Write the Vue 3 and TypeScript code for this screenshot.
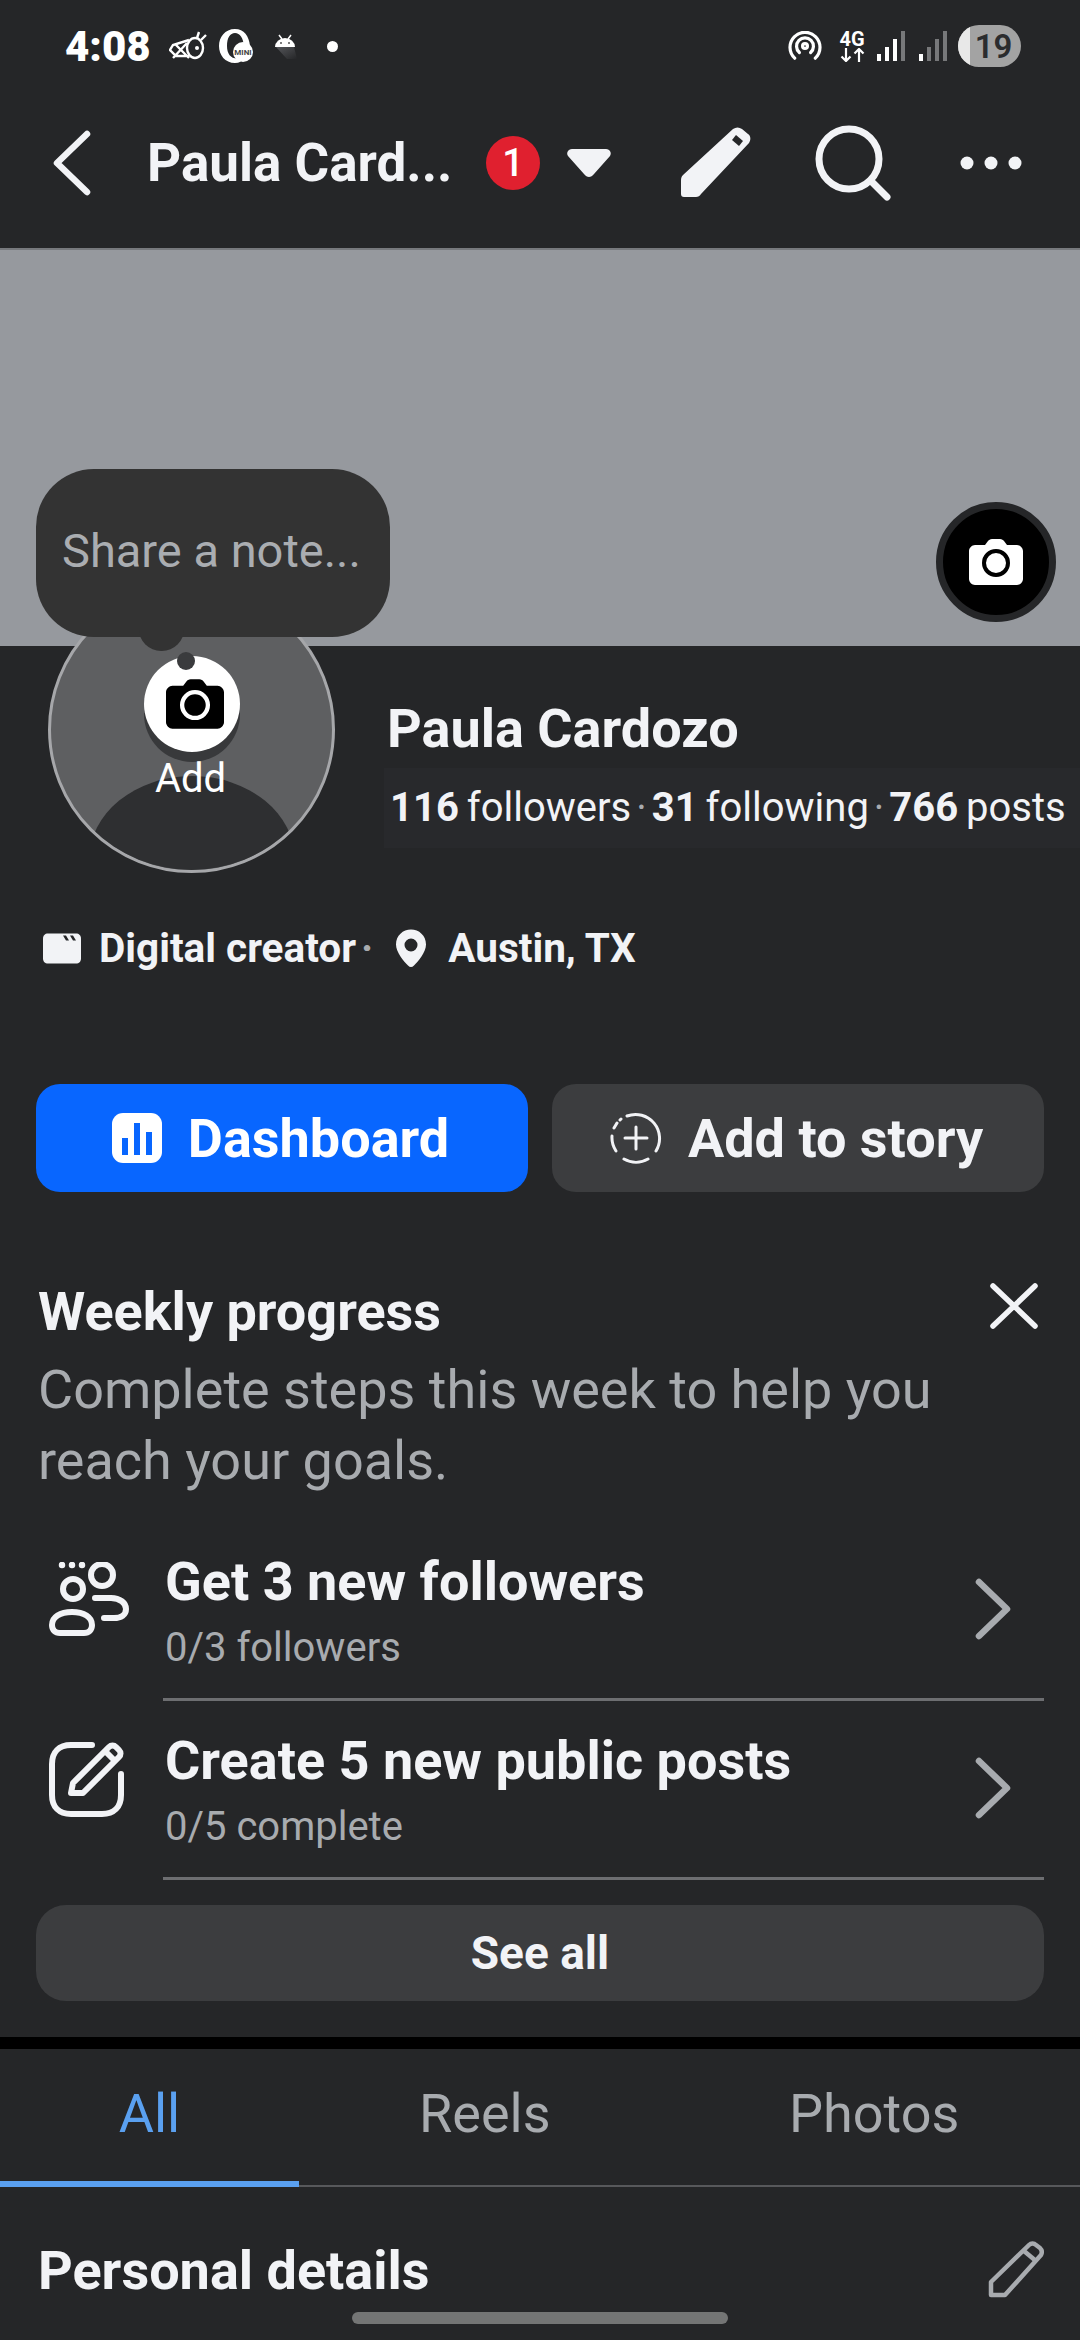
<template>
  <div class="screen">
    <header class="top">
      <div class="status">
        <span class="time">4:08</span>
        <svg class="st-bee" width="38" height="30" viewBox="0 0 38 30" fill="none" stroke="#fff" stroke-width="2.4">
          <ellipse cx="26" cy="17" rx="8" ry="10" />
          <path d="M20 9 4 14l-3 5 6 6 13 0M6 13l14 14M4 27 18 12M28 7l2-6M32 9l5-5" />
          <circle cx="28" cy="17" r="2" fill="#fff" stroke="none" />
        </svg>
        <svg class="st-o" width="36" height="36" viewBox="0 0 36 36">
          <path d="M17 1C7 1 1 9 1 18s6 17 16 17c2 0 4-.5 6-1.500l-3-3C13 31 9 26 9 18S12 5 17 5c5 0 8 5 9 13h6C31 8 26 1 17 1Z" fill="#fff" />
          <circle cx="25" cy="24" r="10" fill="#fff" />
          <text x="25" y="27" text-anchor="middle" font-size="8" font-weight="700" fill="#444" font-family="Roboto, sans-serif">MINI</text>
        </svg>
        <svg class="st-droid" width="24" height="26" viewBox="0 0 24 26">
          <defs>
            <linearGradient id="droid-shadow" x1="0" y1="0" x2="1" y2="1">
              <stop offset="0" stop-color="#55565a" />
              <stop offset="1" stop-color="#252628" />
            </linearGradient>
          </defs>
          <path d="M3 14h18l3 12H14Z" fill="url(#droid-shadow)" />
          <path d="M2 14a10 9 0 0 1 20 0Z" fill="#fff" />
          <path d="M6 2l3 4M18 2l-3 4" stroke="#fff" stroke-width="1.500" />
          <circle cx="8" cy="10" r="1" fill="#555" />
          <circle cx="16" cy="10" r="1" fill="#555" />
        </svg>
        <span class="st-dot"></span>
        <span class="st-spacer"></span>
        <svg class="st-cast" width="34" height="30" viewBox="0 0 36 32" fill="none" stroke="#fff" stroke-width="3.400" stroke-linecap="round">
          <path d="M7 29A16 16 0 1 1 29 29" />
          <path d="M12 23A9 9 0 1 1 24 23" />
          <circle cx="18" cy="16" r="2.600" />
        </svg>
        <div class="st-net">
          <span>4G</span>
          <svg width="25" height="14" viewBox="0 0 25 14" fill="none" stroke="#fff" stroke-width="2.200">
            <path d="M6 0v13M1.500 8.500 6 13l4.500-4.500M19 14V1M14.500 5.500 19 1l4.500 4.500" />
          </svg>
        </div>
        <svg class="st-sig" width="28" height="30" viewBox="0 0 28 30">
          <rect x="0" y="23" width="4" height="7" fill="#fff" />
          <rect x="8" y="16" width="4" height="14" fill="#fff" />
          <rect x="16" y="8" width="4" height="22" fill="#fff" />
          <rect x="24" y="0" width="4" height="30" fill="#77787a" />
        </svg>
        <svg class="st-sig second" width="28" height="30" viewBox="0 0 28 30">
          <rect x="0" y="23" width="4" height="7" fill="#fff" />
          <rect x="8" y="16" width="4" height="14" fill="#77787a" />
          <rect x="16" y="8" width="4" height="22" fill="#77787a" />
          <rect x="24" y="0" width="4" height="30" fill="#77787a" />
        </svg>
        <div class="battery"><span class="charge"></span><b>19</b></div>
      </div>
      <nav class="bar">
        <svg class="back" width="38" height="66" viewBox="0 0 38 66" fill="none" stroke="#f2f3f6" stroke-width="6.500" stroke-linecap="round" stroke-linejoin="round">
          <path d="M34 4 4 33l30 29" />
        </svg>
        <span class="page-name">Paula Card...</span>
        <span class="badge">1</span>
        <svg class="caret" width="46" height="30" viewBox="0 0 46 30">
          <path d="M6 1h34c4 0 6 4 4 7L28 26c-3 4-7 4-10 0L2 8C0 5 2 1 6 1Z" fill="#f2f3f6" />
        </svg>
        <svg class="pen" width="72" height="72" viewBox="0 0 72 72">
          <path d="M54 2c3-2 6-2 9 0l6 5c3 2 3 6 1 9L22 67c-1 2-3 3-5 3H5c-2 0-3-1-3-3V54c0-2 0-4 2-6Z" fill="#f2f3f6" />
          <path d="M57 8 64 14 60 19 53 13Z" fill="#252628" />
        </svg>
        <svg class="search" width="76" height="76" viewBox="0 0 76 76" fill="none" stroke="#f2f3f6" stroke-width="7" stroke-linecap="round">
          <circle cx="34" cy="34" r="30" />
          <path d="M56 56 72 72" />
        </svg>
        <svg class="more" width="62" height="14" viewBox="0 0 62 14" fill="#f2f3f6">
          <circle cx="7" cy="7" r="6.500" /><circle cx="31" cy="7" r="6.500" /><circle cx="55" cy="7" r="6.500" />
        </svg>
      </nav>
    </header>

    <section class="cover">
      <div class="note">Share a note...</div>
      <span class="note-tail"></span>
      <div class="cover-cam">
        <svg width="54" height="46" viewBox="0 0 54 46">
          <path d="M6 6h10l3-4c1-1 2-2 4-2h8c2 0 3 1 4 2l3 4h10c3 0 6 3 6 6v28c0 3-3 6-6 6H6c-3 0-6-3-6-6V12c0-3 3-6 6-6Z" fill="#fff" />
          <circle cx="27" cy="24" r="12" fill="none" stroke="#000" stroke-width="4" />
        </svg>
      </div>
    </section>

    <section class="identity">
      <div class="avatar">
        <span class="body"></span>
        <div class="add-circle">
          <svg width="58" height="50" viewBox="0 0 54 46">
            <path d="M6 6h10l3-4c1-1 2-2 4-2h8c2 0 3 1 4 2l3 4h10c3 0 6 3 6 6v28c0 3-3 6-6 6H6c-3 0-6-3-6-6V12c0-3 3-6 6-6Z" fill="#000" />
            <circle cx="27" cy="24" r="12" fill="none" stroke="#fff" stroke-width="4" />
          </svg>
        </div>
        <span class="note-dot"></span>
        <span class="add-label">Add</span>
      </div>
      <div class="who">
        <h1>Paula Cardozo</h1>
        <p class="stats"><b>116</b> followers<i>·</i><b>31</b> following<i>·</i><b>766</b> posts</p>
      </div>
    </section>

    <section class="meta">
      <svg width="38" height="31" viewBox="0 0 38 30">
        <path d="M5 0h28c3 0 5 2 5 5v20c0 3-2 5-5 5H5c-3 0-5-2-5-5V5c0-3 2-5 5-5Z" fill="#f2f3f6" />
        <path d="M20 2l3 5h3l-3-5ZM27 2l3 5h3l-3-5Z" fill="#252628" />
      </svg>
      <span class="meta-work">Digital creator</span>
      <i>·</i>
      <svg class="pin" width="30" height="39" viewBox="0 0 30 38">
        <path fill-rule="evenodd" d="M15 0c8 0 15 6 15 15 0 8-8 17-12 21-2 2-4 2-6 0C8 32 0 23 0 15 0 6 7 0 15 0Zm0 9a6.500 6.500 0 1 0 0 13 6.500 6.500 0 0 0 0-13Z" fill="#f2f3f6" />
      </svg>
      <span>Austin, TX</span>
    </section>

    <section class="actions">
      <button class="primary">
        <svg width="50" height="50" viewBox="0 0 50 50">
          <rect width="50" height="50" rx="11" fill="#fff" />
          <path d="M10 25h6v17h-6ZM22 10h6v32h-6ZM34 19h6v23h-6Z" fill="#0866ff" />
        </svg>
        Dashboard
      </button>
      <button class="secondary">
        <svg width="52" height="52" viewBox="0 0 52 52" fill="none" stroke="#f2f3f6" stroke-width="3" stroke-linecap="round">
          <path d="M17 4A24 24 0 0 1 46 39M38 47A24 24 0 0 1 14 47M6 39A24 24 0 0 1 2 24M4 16 7 11M10 8l1-1" />
          <path d="M26 15v22M15 26h22" />
        </svg>
        Add to story
      </button>
    </section>

    <section class="weekly">
      <div class="weekly-head">
        <h2>Weekly progress</h2>
        <svg width="48" height="46" viewBox="0 0 48 46" fill="none" stroke="#f2f3f6" stroke-width="5.500" stroke-linecap="round">
          <path d="M3 3 45 43M45 3 3 43" />
        </svg>
      </div>
      <p class="weekly-sub">Complete steps this week to help you reach your goals.</p>
      <div v-for="step in steps" :key="step.title" class="step">
        <div class="step-icon">
          <svg v-if="step.icon === 'people'" width="80" height="76" viewBox="0 0 80 76" fill="none" stroke="#f2f3f6" stroke-width="6" stroke-linecap="round">
            <path d="M13 3h.01M23 3h.01M33 3h.01" stroke-width="6.500" />
            <circle cx="24" cy="27" r="10" />
            <circle cx="53" cy="13" r="11" />
            <path d="M3 63c0-8 8-13 20-13s20 5 20 13c0 5-3 8-8 8H11c-5 0-8-3-8-8Z" />
            <path d="M46 36h16c9 0 15 5 15 11s-5 9-12 9H55" />
          </svg>
          <svg v-else width="76" height="76" viewBox="0 0 76 76" fill="none" stroke="#f2f3f6" stroke-width="6" stroke-linecap="round" stroke-linejoin="round">
            <path d="M43 4H22C10 4 3 11 3 23v31c0 12 7 19 19 19h31c12 0 19-7 19-19V33" />
            <path d="M24 42 60 6c2-2 5-2 7 0l3 3c2 2 2 5 0 7L34 52H22Z" />
            <path d="M57 11l8 8" />
          </svg>
        </div>
        <div class="step-body">
          <div class="step-title">{{ step.title }}</div>
          <div class="step-sub">{{ step.sub }}</div>
          <svg class="chev" width="36" height="62" viewBox="0 0 36 62" fill="none" stroke="#a8abaf" stroke-width="6.500" stroke-linecap="round" stroke-linejoin="round">
            <path d="M4 4 32 31 4 58" />
          </svg>
        </div>
      </div>
      <button class="see-all">See all</button>
    </section>

    <div class="band"></div>

    <div class="tabs">
      <span v-for="tab in tabs" :key="tab.label" class="tab" :class="[tab.cls, { on: tab.on }]">{{ tab.label }}</span>
    </div>

    <section class="details">
      <h2>Personal details</h2>
      <svg width="56" height="58" viewBox="0 0 56 58" fill="none" stroke="#a8abaf" stroke-width="4.500" stroke-linejoin="round">
        <path d="M41 4c2-2 5-2 7 0l4 3c2 2 2 5 1 7L17 54H3V41Z" />
        <path d="M36 10l12 10" />
      </svg>
    </section>

    <div class="home-bar"></div>
  </div>
</template>

<script setup lang="ts">
interface Step {
  title: string
  sub: string
  icon: 'people' | 'edit'
}

const steps: Step[] = [
  { title: 'Get 3 new followers', sub: '0/3 followers', icon: 'people' },
  { title: 'Create 5 new public posts', sub: '0/5 complete', icon: 'edit' },
]

const tabs = [
  { label: 'All', cls: 'tab-all', on: true },
  { label: 'Reels', cls: 'tab-reels', on: false },
  { label: 'Photos', cls: 'tab-photos', on: false },
]
</script>

<style>
html,
body {
  margin: 0;
  background: #252628;
}
</style>

<style scoped>
.screen {
  position: relative;
  width: 1080px;
  height: 2340px;
  overflow: hidden;
  background: #252628;
  color: #f2f3f6;
  font-family: Roboto, "Liberation Sans", sans-serif;
}

h1,
h2,
p {
  margin: 0;
}

button {
  border: none;
  font-family: inherit;
  color: inherit;
}

.top {
  height: 248px;
  box-sizing: border-box;
  padding-top: 23px;
}

.status {
  display: flex;
  align-items: center;
  height: 46px;
  padding: 0 59px 0 65px;
  color: #fff;
}

.time {
  font-size: 42px;
  font-weight: 900;
  width: 104px;
}

.st-o {
  margin-left: 11px;
}

.st-droid {
  margin-left: 19px;
}

.st-dot {
  width: 11px;
  height: 11px;
  border-radius: 50%;
  background: #fff;
  margin-left: 30px;
}

.st-spacer {
  flex: 1;
}

.st-net {
  display: flex;
  flex-direction: column;
  align-items: center;
  width: 26px;
  margin-left: 17px;
  font-size: 20px;
  font-weight: 700;
  line-height: 18px;
}

.st-sig {
  margin-left: 12px;
}

.st-sig.second {
  margin-left: 14px;
}

.battery {
  position: relative;
  display: flex;
  align-items: center;
  justify-content: center;
  width: 63px;
  height: 42px;
  margin-left: 11px;
  border-radius: 21px;
  background: #a3a3a3;
  overflow: hidden;
}

.charge {
  position: absolute;
  left: 0;
  top: 0;
  bottom: 0;
  width: 12px;
  background: #e8e8e8;
}

.battery b {
  position: relative;
  padding-left: 8px;
  font-size: 33px;
  color: #2b2c2e;
  font-weight: 600;
}

.bar {
  display: flex;
  align-items: center;
  height: 112px;
  margin-top: 38px;
  padding-left: 53px;
}

.page-name {
  flex: none;
  margin-left: 56px;
  width: 339px;
  font-size: 53px;
  font-weight: 700;
  white-space: nowrap;
}

.badge {
  flex: none;
  display: flex;
  align-items: center;
  justify-content: center;
  width: 54px;
  height: 54px;
  border-radius: 50%;
  background: #e0202f;
  color: #fff;
  font-size: 38px;
  font-weight: 500;
}

.caret {
  margin-left: 26px;
}

.pen {
  margin-left: 67px;
}

.search {
  margin-left: 64px;
}

.more {
  margin-left: 69px;
}

.cover {
  position: relative;
  height: 398px;
  background: #96999e;
  border-top: 2px solid #77797d;
  box-sizing: border-box;
}

.note {
  position: absolute;
  left: 36px;
  top: 219px;
  display: flex;
  align-items: center;
  box-sizing: border-box;
  width: 354px;
  height: 168px;
  padding: 0 0 6px 26px;
  border-radius: 58px;
  background: #333333;
  color: #aaadb1;
  font-size: 47px;
  white-space: nowrap;
  z-index: 3;
}

.note-tail {
  position: absolute;
  left: 139px;
  top: 375px;
  width: 45px;
  height: 26px;
  border-radius: 0 0 22px 22px;
  background: #333333;
  z-index: 3;
}

.cover-cam {
  position: absolute;
  left: 936px;
  top: 252px;
  display: flex;
  align-items: center;
  justify-content: center;
  width: 120px;
  height: 120px;
  box-sizing: border-box;
  border: 7px solid #252628;
  border-radius: 50%;
  background: #000;
}

.identity {
  display: flex;
  height: 213px;
  padding-left: 48px;
}

.avatar {
  position: relative;
  flex: none;
  width: 287px;
  height: 287px;
  margin-top: -60px;
  box-sizing: border-box;
  border: 3px solid #a6a7aa;
  border-radius: 50%;
  background: #5e5f61;
  overflow: hidden;
  z-index: 1;
}

.body {
  position: absolute;
  left: 38px;
  top: 187px;
  width: 206px;
  height: 168px;
  border-radius: 50%;
  background: #2e2f31;
}

.add-circle {
  position: absolute;
  left: 93px;
  top: 67px;
  display: flex;
  align-items: center;
  justify-content: center;
  width: 96px;
  height: 96px;
  border-radius: 50%;
  background: #fff;
  box-shadow: 0 10px 0 #38393b;
}

.add-circle svg {
  margin-left: 5px;
}

.note-dot {
  position: absolute;
  left: 126px;
  top: 63px;
  width: 18px;
  height: 18px;
  border-radius: 50%;
  background: #3a3b3d;
}

.add-label {
  position: absolute;
  left: 0;
  right: 2px;
  top: 169px;
  text-align: center;
  color: #fff;
  font-size: 40px;
  line-height: 42px;
}

.who {
  flex: 1;
  margin-left: 52px;
  padding-top: 53px;
}

.who h1 {
  font-size: 54px;
  font-weight: 700;
  line-height: 60px;
}

.stats {
  margin-top: 9px;
  margin-left: -3px;
  padding-left: 6px;
  background: #28292c;
  font-size: 40px;
  line-height: 80px;
  word-spacing: -2px;
  white-space: nowrap;
}

.stats b {
  font-weight: 700;
}

.stats i,
.meta i {
  font-style: normal;
  margin: 0 5px;
  color: #a8abaf;
}

.meta {
  display: flex;
  align-items: center;
  height: 50px;
  margin-top: 64px;
  padding-left: 43px;
  font-size: 40.500px;
  font-weight: 700;
  white-space: nowrap;
}

.meta-work {
  margin-left: 18px;
}

.meta .pin {
  margin-left: 18px;
  margin-right: 22px;
}

.actions {
  display: flex;
  gap: 24px;
  padding: 0 36px;
  margin-top: 111px;
}

.actions button {
  display: flex;
  align-items: center;
  justify-content: center;
  gap: 26px;
  flex: 1;
  height: 108px;
  padding-right: 9px;
  border-radius: 24px;
  font-size: 54px;
  font-weight: 700;
}

.primary {
  background: #0866ff;
  color: #fff;
}

.secondary {
  background: #3c3d3f;
}

.weekly {
  padding: 0 36px;
}

.weekly-head {
  display: flex;
  align-items: center;
  justify-content: space-between;
  height: 60px;
  margin-top: 89px;
  padding: 0 6px 0 2px;
}

.weekly-head h2,
.details h2 {
  font-size: 54px;
  font-weight: 700;
}

.weekly-head svg {
  margin-top: -10px;
}

.weekly-sub {
  margin: 13px 0 26px;
  padding-left: 2px;
  color: #a8abaf;
  font-size: 54px;
  line-height: 71px;
}

.step {
  display: flex;
  height: 179px;
}

.step-icon {
  flex: none;
  width: 127px;
  padding-top: 40px;
  padding-left: 13px;
  box-sizing: border-box;
}

.step-body {
  position: relative;
  flex: 1;
  box-sizing: border-box;
  border-bottom: 3px solid #6d6e71;
  padding-top: 31px;
}

.step-title {
  padding-left: 2px;
  font-size: 54px;
  font-weight: 700;
  line-height: 58px;
}

.step-sub {
  margin-top: 14px;
  padding-left: 2px;
  color: #a8abaf;
  font-size: 40px;
  line-height: 46px;
}

.chev {
  position: absolute;
  right: 33px;
  top: 56px;
}

.see-all {
  display: block;
  width: 100%;
  height: 96px;
  margin-top: 25px;
  border-radius: 30px;
  background: #3c3d3f;
  font-size: 46px;
  font-weight: 700;
}

.band {
  height: 12px;
  margin-top: 36px;
  background: #000;
}

.tabs {
  position: relative;
  height: 138px;
  border-bottom: 2px solid #57585b;
  box-sizing: border-box;
  font-size: 54px;
  line-height: 130px;
  color: #a8abaf;
}

.tab {
  position: absolute;
  top: 0;
}

.tab-all {
  left: 0;
  width: 299px;
  text-align: center;
}

.tab-reels {
  left: 419px;
}

.tab-photos {
  left: 789px;
}

.tab.on {
  color: #5aa0f0;
  height: 138px;
  border-bottom: 6px solid #5aa0f0;
  box-sizing: border-box;
}

.details {
  display: flex;
  align-items: center;
  justify-content: space-between;
  padding: 0 36px 0 38px;
  margin-top: 53px;
  height: 60px;
}

.home-bar {
  position: absolute;
  left: 352px;
  top: 2312px;
  width: 376px;
  height: 12px;
  border-radius: 6px;
  background: #747575;
}
</style>
